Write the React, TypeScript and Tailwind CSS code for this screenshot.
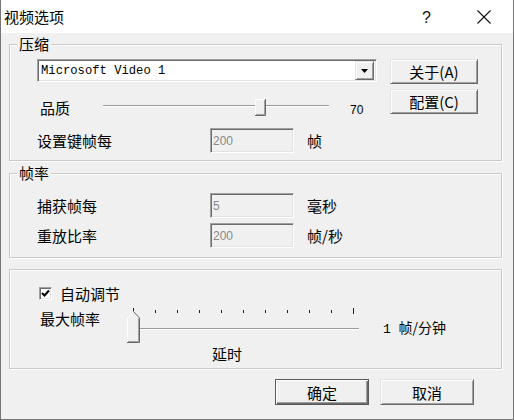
import React from "react";

const cjk = "font-['Noto_Sans_CJK_SC','Noto_Sans',sans-serif]";

function Group({ label, className, children }: { label?: string; className?: string; children: React.ReactNode }) {
  return (
    <div
      className={`relative ml-[8px] w-[493px] border border-[#c9c9c9] shadow-[inset_1px_1px_0_#ffffff,1px_1px_0_#ffffff] ${className ?? ""}`}
    >
      {label && (
        <div className={`absolute left-[7px] top-[-10px] bg-[#f0f0f0] px-[2px] text-[15px] leading-[18px] text-black ${cjk}`}>
          {label}
        </div>
      )}
      {children}
    </div>
  );
}

function RaisedButton({ children, className, def }: { children: React.ReactNode; className?: string; def?: boolean }) {
  const style = def
    ? "border border-[#5a5a5a] shadow-[inset_1px_1px_0_#ffffff,inset_-1px_-1px_0_#696969,inset_-2px_-2px_0_#a0a0a0]"
    : "border border-t-[#e3e3e3] border-l-[#e3e3e3] border-r-[#696969] border-b-[#696969] shadow-[inset_1px_1px_0_#ffffff,inset_-1px_-1px_0_#a0a0a0]";
  return (
    <div className={`flex items-center justify-center bg-[#f0f0f0] text-[15px] leading-none text-black ${cjk} ${style} ${className ?? ""}`}>
      {children}
    </div>
  );
}

function Sunken({ value, className }: { value: string; className?: string }) {
  return (
    <div
      className={`flex items-center border border-t-[#a0a0a0] border-l-[#a0a0a0] border-r-[#ffffff] border-b-[#ffffff] bg-[#f0f0f0] pl-[2px] shadow-[inset_1px_1px_0_#6d6d6d,inset_-1px_-1px_0_#e3e3e3] font-['Liberation_Sans',sans-serif] text-[12px] text-[#8a8a8a] ${className ?? ""}`}
    >
      {value}
    </div>
  );
}

export default function App() {
  const ticks = Array.from({ length: 11 }, (_, i) => i);
  return (
    <div className={`flex h-[420px] w-[514px] flex-col overflow-hidden border-x border-b border-[#767676] bg-[#f0f0f0] ${cjk}`}>
      {/* Title bar */}
      <div className="flex h-[33px] shrink-0 items-center bg-white">
        <div className="pl-[3px] text-[15px] leading-none text-black">视频选项</div>
        <div className="ml-auto mr-[46px] mt-[2px] font-['Liberation_Sans',sans-serif] text-[16px] leading-none text-[#111]">?</div>
        <svg width="14" height="14" viewBox="0 0 14 14" className="mr-[22px]">
          <path d="M0.5 0.5 L13.5 13.5 M13.5 0.5 L0.5 13.5" stroke="#111" strokeWidth="1.1" fill="none" />
        </svg>
      </div>

      {/* Group 1 */}
      <Group label="压缩" className="mt-[11px] h-[117px]">
        <div className="flex pl-[27px] pt-[14px]">
          <div className="flex w-[340px] flex-col">
            {/* combo */}
            <div className="flex h-[23px] items-center border border-t-[#a0a0a0] border-l-[#a0a0a0] border-r-white border-b-white bg-white shadow-[inset_1px_1px_0_#6d6d6d,inset_-1px_-1px_0_#e3e3e3]">
              <div className="pl-[3px] pt-[1px] font-['Liberation_Mono',monospace] text-[12.2px] leading-none text-black">
                Microsoft Video 1
              </div>
              <div className="ml-auto mr-[2px] flex h-[19px] w-[19px] items-center justify-center border border-t-[#e3e3e3] border-l-[#e3e3e3] border-r-[#696969] border-b-[#696969] bg-[#f0f0f0] shadow-[inset_1px_1px_0_#ffffff,inset_-1px_-1px_0_#a0a0a0]">
                <svg width="7" height="4" viewBox="0 0 7 4">
                  <path d="M0 0 H7 L3.5 4 Z" fill="#000" />
                </svg>
              </div>
            </div>
            {/* quality row */}
            <div className="mt-[16px] flex h-[18px] items-center">
              <div className="ml-[3px] w-[63px] text-[15px] leading-none text-black">品质</div>
              <div className="relative h-[18px] w-[226px]">
                <div className="absolute left-0 right-0 top-[7px] h-[1px] bg-[#9a9a9a] shadow-[0_1px_0_#ffffff]" />
                <svg className="absolute left-[152px] top-[1px]" width="11" height="17" viewBox="0 0 11 17">
                  <rect x="0" y="0" width="11" height="17" fill="#f0f0f0" />
                  <path d="M0.5 16.5 V0.5 H10" stroke="#ffffff" fill="none" />
                  <path d="M10.5 0 V16.5 H0" stroke="#696969" fill="none" />
                  <path d="M9.5 1 V15.5 H1" stroke="#a0a0a0" fill="none" />
                </svg>
              </div>
              <div className="ml-[21px] mt-[5px] font-['Liberation_Sans',sans-serif] text-[12px] leading-none text-black">70</div>
            </div>
            {/* key frame row */}
            <div className="mt-[12px] flex items-center">
              <div className="w-[173px] text-[15px] leading-none text-black">设置键帧每</div>
              <Sunken value="200" className="h-[25px] w-[84px]" />
              <div className="ml-[13px] text-[15px] leading-none text-black">帧</div>
            </div>
          </div>
          <div className="ml-[13px] flex flex-col">
            <RaisedButton className="h-[25px] w-[88px]">关于(A)</RaisedButton>
            <RaisedButton className="mt-[5px] h-[25px] w-[88px]">配置(C)</RaisedButton>
          </div>
        </div>
      </Group>

      {/* Group 2 */}
      <Group label="帧率" className="mt-[12px] h-[85px]">
        <div className="flex flex-col pl-[27px] pt-[19px]">
          <div className="flex items-center">
            <div className="w-[173px] text-[15px] leading-none text-black">捕获帧每</div>
            <Sunken value="5" className="h-[25px] w-[84px]" />
            <div className="ml-[13px] text-[15px] leading-none text-black">毫秒</div>
          </div>
          <div className="mt-[5px] flex items-center">
            <div className="w-[173px] text-[15px] leading-none text-black">重放比率</div>
            <Sunken value="200" className="h-[25px] w-[84px]" />
            <div className="ml-[13px] text-[15px] leading-none text-black">帧/秒</div>
          </div>
        </div>
      </Group>

      {/* Group 3 */}
      <Group className="mt-[11px] h-[100px]">
        <div className="flex flex-col pt-[16px]">
          <div className="ml-[29px] flex h-[14px] items-center">
            <div className="flex h-[13px] w-[13px] items-center justify-center border border-t-[#a0a0a0] border-l-[#a0a0a0] border-r-white border-b-white bg-white shadow-[inset_1px_1px_0_#6d6d6d,inset_-1px_-1px_0_#e3e3e3]">
              <svg width="9" height="9" viewBox="0 0 9 9">
                <path d="M1 4 L3.5 6.5 L8 1.5" stroke="#000" strokeWidth="2" fill="none" />
              </svg>
            </div>
            <div className="ml-[8px] text-[15px] leading-none text-black">自动调节</div>
          </div>
          <div className="mt-[8px] flex">
            <div className="ml-[30px] w-[86px] pt-[2px] text-[15px] leading-[18px] text-black">最大帧率</div>
            <div className="relative h-[36px] w-[244px]">
              {ticks.map((i) => (
                <div
                  key={i}
                  className={`absolute w-[1px] bg-[#222] ${i === 0 || i === 10 ? "top-[0px] h-[6px]" : "top-[2px] h-[3px]"}`}
                  style={{ left: 7 + i * 22 }}
                />
              ))}
              <div className="absolute left-[11px] top-[20px] h-[1px] w-[222px] bg-[#9a9a9a] shadow-[0_1px_0_#ffffff]" />
              <svg className="absolute left-[1px] top-[3px]" width="13" height="32" viewBox="0 0 13 32">
                <path d="M0.5 31.5 V7 L6.5 0.5 L12.5 7 V31.5 Z" fill="#f0f0f0" />
                <path d="M0.5 31 V7 L6.5 0.5" stroke="#ffffff" fill="none" />
                <path d="M6.5 0.5 L12.5 7 V31.5 H0" stroke="#696969" fill="none" />
                <path d="M11.5 7.5 V30.5 H1" stroke="#a0a0a0" fill="none" />
              </svg>
            </div>
            <div className="ml-[13px] mt-[10px] text-[14px] leading-[18px] text-black">
              <span className="font-['Liberation_Mono',monospace] text-[13px]">1 </span>帧/分钟
            </div>
          </div>
          <div className="ml-[202px] mt-[1px] text-[15px] leading-[18px] text-black">延时</div>
        </div>
      </Group>

      {/* Bottom buttons */}
      <div className="mt-[10px] flex justify-end pr-[39px]">
        <RaisedButton def className="h-[26px] w-[94px]">确定</RaisedButton>
        <RaisedButton className="ml-[11px] h-[26px] w-[94px]">取消</RaisedButton>
      </div>
    </div>
  );
}
